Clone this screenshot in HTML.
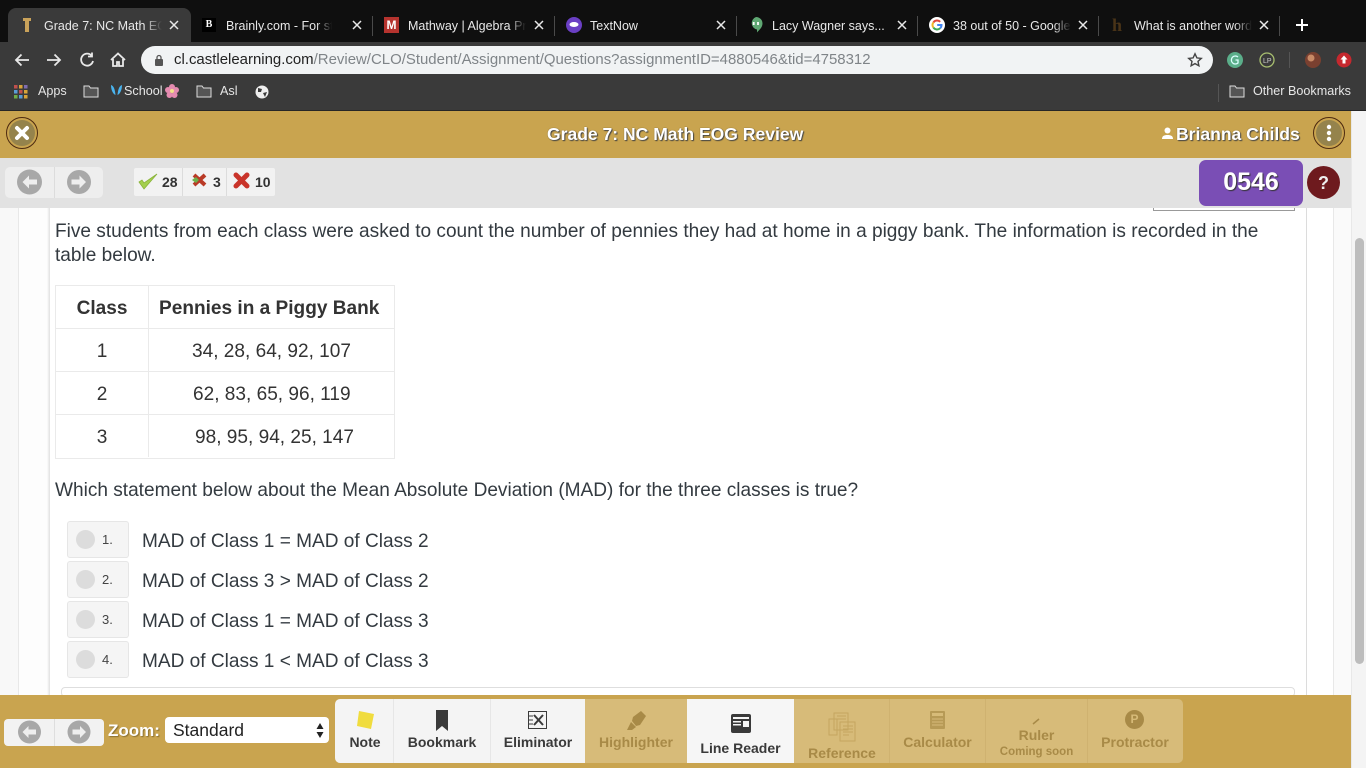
<!DOCTYPE html>
<html><head><meta charset="utf-8"><style>
html,body{margin:0;padding:0;width:1366px;height:768px;overflow:hidden;background:#fff;font-family:"Liberation Sans",sans-serif}
.a,.t{position:absolute}
.t{white-space:nowrap;line-height:1}
.tab{color:#e8e8e8;font-size:12.5px;top:19px;line-height:14px;overflow:hidden}
.fade{-webkit-mask-image:linear-gradient(to right,#000 85%,transparent 100%);mask-image:linear-gradient(to right,#000 85%,transparent 100%)}
.x{position:absolute;top:20px}
.sep{position:absolute;top:16px;width:1px;height:20px;background:#4a4a4a}
.bm{color:#e6e6e6;font-size:12.6px;top:85px}
.q{color:#333a40;font-size:19.07px;margin-top:1px}
.cell{color:#333;font-size:19.07px;text-align:center;margin-top:1px}
.opt{position:absolute;left:67px;width:60px;height:35px;background:#f5f5f5;border:1px solid #e6e6e6;border-radius:3px}
.opt i{position:absolute;left:8px;top:8px;width:19px;height:19px;border-radius:50%;background:#dcdcdc}
.opt b{position:absolute;left:34px;top:10px;font:13px "Liberation Sans",sans-serif;color:#444}
.tl{color:#3a3a3a;font-size:14px;font-weight:bold;text-align:center}
.dl{color:#a88a47;font-size:14px;font-weight:bold;text-align:center}
.v{position:absolute;width:1px;background:#e6e6e6}
.hd{font-size:17.55px;font-weight:bold;color:#fff;text-shadow:1px 1px 1px #444,0 0 1px #6b5a2c}
</style></head><body>

<!-- tab strip -->
<div class="a" style="left:0;top:0;width:1366px;height:42px;background:#0f0f0f"></div>
<div class="a" style="left:8px;top:8px;width:183px;height:34px;background:#3a3a3a;border-radius:8px 8px 0 0"></div>
<svg class="a" style="left:20px;top:17px" width="14" height="16"><path d="M3 1h8v3H9v11H5V4H3z" fill="#c9a25a"/></svg>
<div class="t tab fade" style="left:44px;width:118px">Grade 7: NC Math EOG</div>
<svg class="x" style="left:169px" width="10" height="10"><path d="M1 1l8 8M9 1L1 9" stroke="#e8e8e8" stroke-width="1.500"/></svg>
<div class="a" style="left:202px;top:18px;width:14px;height:14px;background:#000;color:#fff;font:bold 10px 'Liberation Serif',serif;text-align:center;line-height:14px">B</div>
<div class="t tab fade" style="left:226px;width:106px">Brainly.com - For stu</div>
<svg class="x" style="left:352px" width="10" height="10"><path d="M1 1l8 8M9 1L1 9" stroke="#e8e8e8" stroke-width="1.500"/></svg>
<div class="sep" style="left:372px"></div>
<div class="a" style="left:384px;top:17px;width:15px;height:16px;background:#b5332e;color:#fff;font:bold 12px 'Liberation Sans',sans-serif;text-align:center;line-height:16px">M</div>
<div class="t tab fade" style="left:408px;width:118px">Mathway | Algebra Pr</div>
<svg class="x" style="left:534px" width="10" height="10"><path d="M1 1l8 8M9 1L1 9" stroke="#e8e8e8" stroke-width="1.500"/></svg>
<div class="sep" style="left:554px"></div>
<svg class="a" style="left:566px;top:17px" width="16" height="16"><circle cx="8" cy="8" r="8" fill="#6a3fc4"/><ellipse cx="8" cy="7.500" rx="4.500" ry="2.500" fill="#fff"/></svg>
<div class="t tab" style="left:590px">TextNow</div>
<svg class="x" style="left:716px" width="10" height="10"><path d="M1 1l8 8M9 1L1 9" stroke="#e8e8e8" stroke-width="1.500"/></svg>
<div class="sep" style="left:736px"></div>
<svg class="a" style="left:749px;top:16px" width="14" height="18"><path d="M7 1a6.500 6.500 0 0 1 6.500 6.500c0 4-3.500 6.500-5.500 9v-3A6.500 6.500 0 0 1 7 1z" fill="#5fa873"/><path d="M4.700 6v3M9 6v3" stroke="#fff" stroke-width="1.800"/></svg>
<div class="t tab" style="left:772px">Lacy Wagner says...</div>
<svg class="x" style="left:897px" width="10" height="10"><path d="M1 1l8 8M9 1L1 9" stroke="#e8e8e8" stroke-width="1.500"/></svg>
<div class="sep" style="left:917px"></div>
<svg class="a" style="left:929px;top:17px" width="16" height="16"><circle cx="8" cy="8" r="8" fill="#fff"/><path d="M4.400 5.400A4.500 4.500 0 0 1 11.200 4.800" stroke="#e0463a" stroke-width="2" fill="none"/><path d="M4.400 5.400A4.500 4.500 0 0 0 4.400 10.600" stroke="#f0b828" stroke-width="2" fill="none"/><path d="M4.400 10.600A4.500 4.500 0 0 0 11.200 11.200" stroke="#3da856" stroke-width="2" fill="none"/><path d="M11.200 11.200A4.500 4.500 0 0 0 12.500 8H8.200" stroke="#4285f4" stroke-width="2" fill="none"/></svg>
<div class="t tab fade" style="left:953px;width:118px">38 out of 50 - Google</div>
<svg class="x" style="left:1078px" width="10" height="10"><path d="M1 1l8 8M9 1L1 9" stroke="#e8e8e8" stroke-width="1.500"/></svg>
<div class="sep" style="left:1098px"></div>
<div class="a" style="left:1112px;top:15px;font:bold 18px 'Liberation Serif',serif;color:#4a3418">h</div>
<div class="t tab fade" style="left:1134px;width:118px">What is another word</div>
<svg class="x" style="left:1259px" width="10" height="10"><path d="M1 1l8 8M9 1L1 9" stroke="#e8e8e8" stroke-width="1.500"/></svg>
<div class="sep" style="left:1279px"></div>
<svg class="a" style="left:1295px;top:18px" width="14" height="14"><path d="M7 1v12M1 7h12" stroke="#fff" stroke-width="2"/></svg>

<!-- toolbar -->
<div class="a" style="left:0;top:42px;width:1366px;height:68px;background:#3a3a3a"></div>
<div class="a" style="left:0;top:110px;width:1366px;height:1px;background:#262626"></div>
<svg class="a" style="left:12px;top:50px" width="120" height="20" fill="none" stroke="#e8e8e8" stroke-width="1.800"><path d="M17 10H4M9.500 4.500 4 10l5.500 5.500"/><path d="M35 10h13M42.500 4.500 48 10l-5.500 5.500"/><path d="M79.500 5.500a6 6 0 1 0 1.500 5.500M80 2.500v4h-4"/><path d="M99 10l7-6.500 7 6.500M101 9v7h4v-4h2v4h4V9"/></svg>
<div class="a" style="left:141px;top:46px;width:1072px;height:28px;background:#f1f3f4;border-radius:14px"></div>
<svg class="a" style="left:153px;top:54px" width="12" height="12"><rect x="2" y="5" width="8" height="7" rx="1" fill="#555"/><path d="M4 5V3.500a2 2 0 0 1 4 0V5" stroke="#555" fill="none" stroke-width="1.300"/></svg>
<div class="t" style="left:174px;top:53px;font-size:14.960px;color:#7f8488"><span style="color:#222">cl.castlelearning.com</span>/Review/CLO/Student/Assignment/Questions?assignmentID=4880546&amp;tid=4758312</div>
<svg class="a" style="left:1187px;top:52px" width="16" height="16"><path d="M8 1.800l1.900 4.100 4.400.5-3.300 3 .9 4.400L8 11.600l-3.900 2.200.9-4.400-3.300-3 4.400-.5z" fill="none" stroke="#444" stroke-width="1.400"/></svg>
<svg class="a" style="left:1226px;top:51px" width="132" height="18"><circle cx="9" cy="9" r="8" fill="#5bae8a"/><path d="M12 6a4 4 0 1 0 0 6V9H9.500" stroke="#dff" fill="none" stroke-width="1.300"/><circle cx="41" cy="9" r="7" fill="#3a3a3a" stroke="#a8bf70" stroke-width="1.300"/><text x="37" y="12" font-size="7" fill="#ccc" font-family="Liberation Sans">LP</text><rect x="63" y="1" width="1" height="16" fill="#555"/><circle cx="87" cy="9" r="8" fill="#7a4030"/><circle cx="85" cy="7" r="3.500" fill="#c98a66"/><circle cx="118" cy="9" r="7.500" fill="#c5282e"/><path d="M118 4.500l3.500 4H119.500v4h-3v-4h-2z" fill="#fff"/></svg>

<!-- bookmarks -->
<svg class="a" style="left:14px;top:85px" width="14" height="14"><g><rect x="0" y="0" width="3.500" height="3.500" fill="#c0504d"/><rect x="5" y="0" width="3.500" height="3.500" fill="#d8a43a"/><rect x="10" y="0" width="3.500" height="3.500" fill="#7f6db0"/><rect x="0" y="5" width="3.500" height="3.500" fill="#5b9bd5"/><rect x="5" y="5" width="3.500" height="3.500" fill="#c0504d"/><rect x="10" y="5" width="3.500" height="3.500" fill="#d8a43a"/><rect x="0" y="10" width="3.500" height="3.500" fill="#70ad47"/><rect x="5" y="10" width="3.500" height="3.500" fill="#5b9bd5"/><rect x="10" y="10" width="3.500" height="3.500" fill="#d8a43a"/></g></svg>
<div class="t bm" style="left:38px">Apps</div>
<svg class="a" style="left:83px;top:84px" width="16" height="14"><path d="M1 2h5l1.500 2H15v9H1z" fill="#555" stroke="#ddd"/></svg>
<svg class="a" style="left:110px;top:84px" width="13" height="13"><path d="M1 1c3 1 4 5 4.500 10C3 10 1 6 1 1zM12 1c-3 1-4 5-4.500 10C10 10 12 6 12 1z" fill="#4ab4ef"/></svg>
<div class="t bm" style="left:124px">School</div>
<svg class="a" style="left:165px;top:84px" width="14" height="14"><circle cx="7" cy="3" r="3" fill="#e58bb0"/><circle cx="3" cy="6" r="3" fill="#e58bb0"/><circle cx="11" cy="6" r="3" fill="#e58bb0"/><circle cx="4.500" cy="11" r="3" fill="#e58bb0"/><circle cx="9.500" cy="11" r="3" fill="#e58bb0"/><circle cx="7" cy="7" r="2" fill="#f5e28a"/></svg>
<svg class="a" style="left:196px;top:84px" width="16" height="14"><path d="M1 2h5l1.500 2H15v9H1z" fill="#555" stroke="#ddd"/></svg>
<div class="t bm" style="left:220px">Asl</div>
<svg class="a" style="left:255px;top:85px" width="14" height="14"><circle cx="7" cy="7" r="6.500" fill="#eee"/><path d="M3 3l4 1-1 3-3 0zM8 8l4-1-2 5z" fill="#3a3a3a"/></svg>
<div class="a" style="left:1218px;top:84px;width:1px;height:18px;background:#555"></div>
<svg class="a" style="left:1229px;top:84px" width="16" height="14"><path d="M1 2h5l1.500 2H15v9H1z" fill="#555" stroke="#ddd"/></svg>
<div class="t bm" style="left:1253px">Other Bookmarks</div>

<!-- page -->
<div class="a" style="left:0;top:111px;width:1351px;height:47px;background:#c9a44f"></div>
<div class="a" style="left:1351px;top:111px;width:15px;height:657px;background:#f4f4f4;border-left:1px solid #e8e8e8;box-sizing:border-box"></div>
<div class="a" style="left:1355px;top:238px;width:9px;height:426px;background:#bdbdbd;border-radius:5px"></div>
<svg class="a" style="left:5px;top:116px" width="34" height="34"><circle cx="17" cy="17" r="15.500" fill="none" stroke="#4d2a10" stroke-width="1"/><circle cx="17" cy="17" r="13" fill="#95834c"/><path d="M12 12l10 10M22 12l-10 10" stroke="#fff" stroke-width="4" stroke-linecap="round"/></svg>
<div class="t hd" style="left:547px;top:126px">Grade 7: NC Math EOG Review</div>
<svg class="a" style="left:1161px;top:127px" width="13" height="13"><circle cx="6.500" cy="3.500" r="3" fill="#fff"/><path d="M1 12c0-3 2-4 5.500-4s5.500 1 5.500 4z" fill="#fff"/></svg>
<div class="t hd" style="left:1176px;top:126px">Brianna Childs</div>
<svg class="a" style="left:1312px;top:116px" width="34" height="34"><circle cx="17" cy="17" r="15.500" fill="none" stroke="#4d2a10" stroke-width="1"/><circle cx="17" cy="17" r="13" fill="#95834c"/><circle cx="17" cy="11" r="2.200" fill="#fff"/><circle cx="17" cy="17" r="2.200" fill="#fff"/><circle cx="17" cy="23" r="2.200" fill="#fff"/></svg>

<!-- gray bar -->
<div class="a" style="left:0;top:158px;width:1351px;height:50px;background:#e2e2e2"></div>
<div class="a" style="left:5px;top:167px;width:98px;height:31px;background:#eeeeee;border-radius:5px"></div>
<div class="a" style="left:54px;top:167px;width:1px;height:31px;background:#dcdcdc"></div>
<svg class="a" style="left:17px;top:169px" width="76" height="26"><circle cx="12.500" cy="13" r="12.500" fill="#a8a8a8"/><path d="M5.500 13l6.500-6.500v4h8v5h-8v4z" fill="#eee"/><circle cx="62" cy="13" r="12" fill="#a8a8a8"/><path d="M69 13l-6.500-6.500v4h-8v5h8v4z" fill="#eee"/></svg>
<div class="a" style="left:134px;top:168px;width:141px;height:28px;background:#f2f2f2;border-radius:2px"></div>
<div class="a" style="left:182px;top:168px;width:1px;height:28px;background:#dcdcdc"></div>
<div class="a" style="left:226px;top:168px;width:1px;height:28px;background:#dcdcdc"></div>
<svg class="a" style="left:138px;top:172px" width="20" height="19"><path d="M1 10l5 7L19 2l-13 9-2-3z" fill="#a3cf4c" stroke="#8ab33a" stroke-width=".8"/></svg>
<div class="t" style="left:162px;top:175px;font-size:14px;font-weight:bold;color:#333">28</div>
<svg class="a" style="left:191px;top:172px" width="17" height="16"><path d="M3 3l11 10" stroke="#b93a26" stroke-width="4"/><path d="M14 3L3 13" stroke="#b93a26" stroke-width="4"/><path d="M1 8l4-3 3 3-3 3z" fill="#6cb04a"/></svg>
<div class="t" style="left:213px;top:175px;font-size:14px;font-weight:bold;color:#333">3</div>
<svg class="a" style="left:233px;top:172px" width="17" height="17"><path d="M3 3l11 11M14 3L3 14" stroke="#c9342a" stroke-width="5" stroke-linecap="round"/></svg>
<div class="t" style="left:255px;top:175px;font-size:14px;font-weight:bold;color:#333">10</div>
<div class="a" style="left:1199px;top:160px;width:104px;height:46px;background:#7a4eb5;border-radius:7px"></div>
<div class="t" style="left:1199px;top:170px;width:104px;text-align:center;font-size:25px;font-weight:bold;color:#fff;text-shadow:1px 1px 1px #333">0546</div>
<div class="a" style="left:1307px;top:166px;width:33px;height:33px;border-radius:50%;background:#6e1a1e"></div>
<div class="t" style="left:1307px;top:174px;width:33px;text-align:center;font-size:18px;font-weight:bold;color:#eee">?</div>

<!-- content -->
<div class="a" style="left:0;top:208px;width:18px;height:487px;background:#f8f8f8;border-right:1px solid #e8e8e8"></div>
<div class="a" style="left:19px;top:208px;width:30px;height:487px;background:#fdfdfd"></div>
<div class="a" style="left:47px;top:208px;width:3px;height:487px;background:linear-gradient(to right,#fdfdfd,#e0e0e0)"></div>
<div class="a" style="left:1306px;top:208px;width:1px;height:487px;background:#dcdcdc"></div>
<div class="a" style="left:1333px;top:208px;width:1px;height:487px;background:#e8e8e8"></div>
<div class="a" style="left:1334px;top:208px;width:17px;height:487px;background:#fafafa"></div>
<div class="a" style="left:1153px;top:208px;width:142px;height:3px;border:1px solid #999;border-top:0;box-sizing:border-box"></div>

<div class="t q" style="left:55px;top:221px">Five students from each class were asked to count the number of pennies they had at home in a piggy bank. The information is recorded in the</div>
<div class="t q" style="left:55px;top:245px">table below.</div>

<div class="a" style="left:55px;top:285px;width:338px;height:172px;border:1px solid #eaeaea"></div>
<div class="a" style="left:55px;top:328px;width:340px;height:1px;background:#eaeaea"></div>
<div class="a" style="left:55px;top:371px;width:340px;height:1px;background:#eaeaea"></div>
<div class="a" style="left:55px;top:414px;width:340px;height:1px;background:#eaeaea"></div>
<div class="a" style="left:148px;top:285px;width:1px;height:172px;background:#eaeaea"></div>
<div class="t cell" style="left:56px;top:298px;width:92px;font-weight:bold">Class</div>
<div class="t cell" style="left:159px;top:298px;font-weight:bold">Pennies in a Piggy Bank</div>
<div class="t cell" style="left:56px;top:341px;width:92px">1</div>
<div class="t cell" style="left:192px;top:341px">34, 28, 64, 92, 107</div>
<div class="t cell" style="left:56px;top:384px;width:92px">2</div>
<div class="t cell" style="left:193px;top:384px">62, 83, 65, 96, 119</div>
<div class="t cell" style="left:56px;top:427px;width:92px">3</div>
<div class="t cell" style="left:195px;top:427px">98, 95, 94, 25, 147</div>

<div class="t q" style="left:55px;top:480px">Which statement below about the Mean Absolute Deviation (MAD) for the three classes is true?</div>

<div class="opt" style="top:521px"><i></i><b>1.</b></div>
<div class="t q" style="left:142px;top:531px">MAD of Class 1 = MAD of Class 2</div>
<div class="opt" style="top:561px"><i></i><b>2.</b></div>
<div class="t q" style="left:142px;top:571px">MAD of Class 3 &gt; MAD of Class 2</div>
<div class="opt" style="top:601px"><i></i><b>3.</b></div>
<div class="t q" style="left:142px;top:611px">MAD of Class 1 = MAD of Class 3</div>
<div class="opt" style="top:641px"><i></i><b>4.</b></div>
<div class="t q" style="left:142px;top:651px">MAD of Class 1 &lt; MAD of Class 3</div>
<div class="a" style="left:61px;top:687px;width:1234px;height:10px;border:1px solid #dedede;border-radius:4px;box-sizing:border-box"></div>

<!-- footer -->
<div class="a" style="left:0;top:695px;width:1351px;height:73px;background:#c9a44f"></div>
<div class="a" style="left:4px;top:719px;width:100px;height:27px;background:#f2f2f2;border-radius:4px"></div>
<div class="a" style="left:54px;top:719px;width:1px;height:27px;background:#dedede"></div>
<svg class="a" style="left:17px;top:720px" width="76" height="24"><circle cx="12.500" cy="12" r="11.500" fill="#a8a8a8"/><path d="M5.500 12l6-6v3.500h7.500v5H11.500V18z" fill="#eee"/><circle cx="62" cy="12" r="11.500" fill="#a8a8a8"/><path d="M69 12l-6-6v3.500h-7.500v5H63V18z" fill="#eee"/></svg>
<div class="t" style="left:108px;top:722px;font-size:17px;font-weight:bold;color:#fff;text-shadow:1px 1px 1px #8a7030">Zoom:</div>
<div class="a" style="left:165px;top:717px;width:164px;height:26px;background:#fff;border-radius:4px"></div>
<div class="t" style="left:173px;top:722px;font-size:17.500px;color:#222">Standard</div>
<svg class="a" style="left:315px;top:722px" width="10" height="17"><path d="M5 1l3.500 6h-7zM5 16l3.500-6h-7z" fill="#222"/></svg>

<div class="a" style="left:335px;top:699px;width:250px;height:64px;background:#f4f4f4;border-radius:5px 0 0 5px"></div>
<div class="a" style="left:585px;top:699px;width:598px;height:64px;background:#d7bb79;border-radius:0 5px 5px 0"></div>
<div class="v" style="left:393px;top:699px;height:64px"></div>
<div class="v" style="left:490px;top:699px;height:64px"></div>
<div class="a" style="left:687px;top:699px;width:107px;height:64px;background:#f6f6f6"></div>
<div class="v" style="left:889px;top:699px;height:64px;background:#cfb270"></div>
<div class="v" style="left:985px;top:699px;height:64px;background:#cfb270"></div>
<div class="v" style="left:1087px;top:699px;height:64px;background:#cfb270"></div>

<svg class="a" style="left:354px;top:710px" width="22" height="20"><path d="M5 1l15 3-3 15-14-3z" fill="#f0dc3e"/></svg>
<div class="t tl" style="left:336px;top:735px;width:58px">Note</div>
<svg class="a" style="left:435px;top:710px" width="14" height="21"><path d="M1 0h12v21l-6-5-6 5z" fill="#3a3a3a"/></svg>
<div class="t tl" style="left:394px;top:735px;width:96px">Bookmark</div>
<svg class="a" style="left:527px;top:710px" width="22" height="20" fill="none" stroke="#3a3a3a"><rect x="1.500" y="1.500" width="18" height="17"/><path d="M7 5l9 10M16 5L7 15" stroke-width="2"/><path d="M1 6h5M1 10h5M1 14h5"/></svg>
<div class="t tl" style="left:491px;top:735px;width:94px">Eliminator</div>

<svg class="a" style="left:625px;top:710px" width="22" height="22"><path d="M8 7l8-6 5 5-6 9-4 1-4-5z" fill="#a88a47"/><path d="M6 12l5 5-4 3H2z" fill="#a88a47"/></svg>
<div class="t dl" style="left:585px;top:735px;width:102px">Highlighter</div>
<svg class="a" style="left:731px;top:714px" width="20" height="19"><rect width="20" height="19" rx="2" fill="#3a3a3a"/><rect x="2" y="3" width="16" height="2" fill="#f6f6f6"/><rect x="2" y="7" width="8" height="1.500" fill="#f6f6f6"/><rect x="2" y="10" width="8" height="1.500" fill="#f6f6f6"/><rect x="12" y="7" width="6" height="6" fill="#f6f6f6"/></svg>
<div class="t tl" style="left:687px;top:741px;width:107px">Line Reader</div>
<svg class="a" style="left:828px;top:712px" width="30" height="30" fill="none" stroke="#c4a660"><rect x="6" y="1" width="14" height="17"/><rect x="12" y="10" width="15" height="19"/><rect x="1" y="7" width="8" height="16"/><path d="M9 4h9M9 7h9M15 14h10M15 17h10M15 20h10M15 23h6"/></svg>
<div class="t dl" style="left:795px;top:746px;width:94px">Reference</div>
<svg class="a" style="left:930px;top:711px" width="15" height="18"><rect width="15" height="18" rx="1" fill="#b79a56"/><rect x="2" y="2" width="11" height="3" fill="#d7bb79"/><path d="M2 8h11M2 11h11M2 14h11" stroke="#d7bb79"/></svg>
<div class="t dl" style="left:890px;top:735px;width:95px">Calculator</div>
<svg class="a" style="left:1032px;top:717px" width="9" height="9"><path d="M1 7l6-5" stroke="#a88a47" stroke-width="1.500"/></svg>
<div class="t dl" style="left:986px;top:728px;width:101px">Ruler</div>
<div class="t dl" style="left:986px;top:747px;width:101px;font-size:11.500px;font-weight:bold">Coming soon</div>
<div class="a" style="left:1125px;top:710px;width:19px;height:19px;border-radius:50%;background:#a88a47;color:#d7bb79;font:bold 12px/19px 'Liberation Sans',sans-serif;text-align:center">P</div>
<div class="t dl" style="left:1088px;top:735px;width:94px">Protractor</div>
</body></html>
